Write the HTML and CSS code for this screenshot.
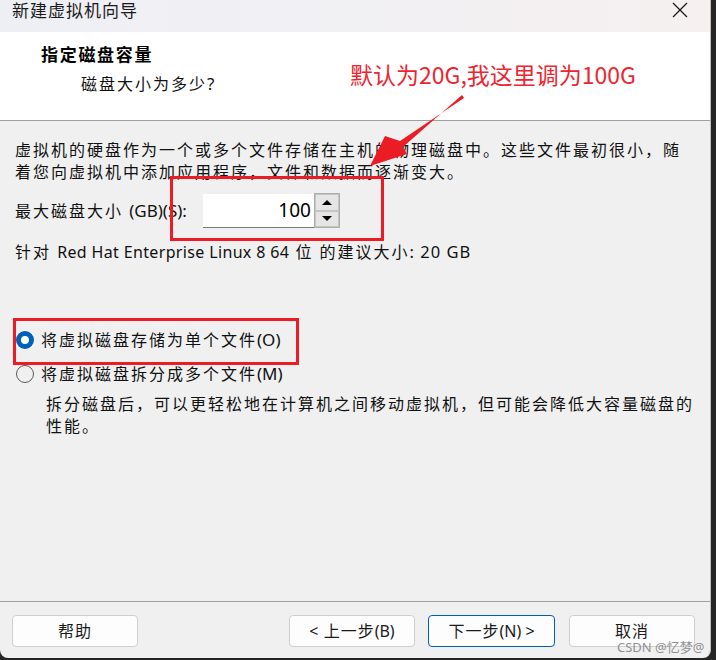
FILE: index.html
```html
<!DOCTYPE html>
<html lang="zh-CN">
<head>
<meta charset="utf-8">
<title>新建虚拟机向导</title>
<link rel="stylesheet" href="styles.css">
</head>
<body>
<div class="screen">
  <div class="window">
    <div class="titlebar">
      <span class="title">新建虚拟机向导</span>
      <svg class="close" width="16" height="16" viewBox="0 0 16 16"><path d="M1 1 L15 15 M15 1 L1 15" stroke="#1a1a1a" stroke-width="1.3" fill="none"/></svg>
    </div>
    <div class="header">
      <div class="h-title">指定磁盘容量</div>
      <div class="h-sub">磁盘大小为多少<span class="q">?</span></div>
    </div>
    <div class="content">
      <p class="para">虚拟机的硬盘作为一个或多个文件存储在主机的物理磁盘中。这些文件最初很小，随<br>着您向虚拟机中添加应用程序，文件和数据而逐渐变大。</p>
      <div class="size-row">
        <span class="label">最大磁盘大小 <span class="en">(GB)(S):</span></span>
        <div class="spin">
          <div class="spin-input">100</div>
          <div class="spin-btns">
            <div class="spin-btn"><span class="tri-up"></span></div>
            <div class="spin-btn"><span class="tri-down"></span></div>
          </div>
        </div>
      </div>
      <p class="rec">针对 <span class="en os">Red Hat Enterprise Linux 8 64</span> 位 的建议大小<span class="en size">: 20 GB</span></p>
      <div class="radio-row first">
        <span class="radio checked"></span>
        <span class="radio-text">将虚拟磁盘存储为单个文件<span class="en">(O)</span></span>
      </div>
      <div class="radio-row">
        <span class="radio"></span>
        <span class="radio-text">将虚拟磁盘拆分成多个文件<span class="en">(M)</span></span>
      </div>
      <p class="desc">拆分磁盘后，可以更轻松地在计算机之间移动虚拟机，但可能会降低大容量磁盘的<br>性能。</p>
    </div>
    <div class="footer">
      <button class="btn">帮助</button>
      <div class="spacer"></div>
      <button class="btn"><span class="en">&lt;</span> 上一步<span class="en">(B)</span></button>
      <button class="btn primary">下一步<span class="en">(N) &gt;</span></button>
      <button class="btn cancel">取消</button>
    </div>
  </div>

  <div class="note">默认为20G,我这里调为100G</div>
  <svg class="arrow" width="716" height="660" viewBox="0 0 716 660">
    <polygon points="464,98 400,141 385,136 370,166 407,154 403,147 462,95" fill="#ec1c24"/>
  </svg>
  <div class="mark mark-size"></div>
  <div class="mark mark-radio"></div>
  <div class="watermark">CSDN @忆梦@</div>
</div>
</body>
</html>
```
FILE: styles.css
```css
* { box-sizing: border-box; }
html, body { margin: 0; padding: 0; }
body {
  background: #262626;
  font-family: "Noto Sans", "Noto Sans CJK SC", sans-serif;
  color: #111;
}
.screen {
  position: relative;
  width: 716px;
  height: 660px;
  overflow: hidden;
  background: #262626;
}
.window {
  width: 711px;
  height: 658px;
  background: #f0f0f0;
  border-right: 1px solid #bdbdbd;
  border-radius: 0 0 8px 8px;
  display: flex;
  flex-direction: column;
  overflow: hidden;
}
.titlebar {
  height: 32px;
  background: linear-gradient(90deg, #eeeff5 0%, #f1f0f3 50%, #f6f0f0 100%);
  display: flex;
  align-items: flex-start;
  padding: 1px 0 0 12px;
}
.title {
  font-family: "Noto Sans CJK SC", sans-serif;
  font-size: 17px;
  letter-spacing: 1px;
  color: #1a1a1a;
  line-height: 18px;
}
.close {
  margin-left: auto;
  margin-right: 22px;
  margin-top: 1px;
}
.header {
  height: 89px;
  background: #fff;
  border-bottom: 1px solid #a0a0a0;
  padding: 11px 0 0 41px;
}
.h-title {
  font-family: "Noto Sans CJK SC", sans-serif;
  font-weight: bold;
  font-size: 17px;
  letter-spacing: 1.7px;
  line-height: 22px;
  color: #000;
}
.h-sub {
  font-family: "Noto Sans CJK SC", sans-serif;
  font-size: 16px;
  letter-spacing: 2px;
  line-height: 22px;
  margin: 7px 0 0 40px;
  color: #111;
}
.q {
  font-family: "Noto Sans", sans-serif;
  font-size: 17px;
  letter-spacing: 0;
}
.content {
  flex: 1;
  padding: 18px 0 0 15px;
  font-size: 16px;
  letter-spacing: 2px;
  line-height: 22px;
}
.en {
  font-family: "Noto Sans", sans-serif;
  font-size: 17px;
  letter-spacing: 0;
}
.rec .en.os { font-size: 16px; letter-spacing: 0.35px; }
.rec .en.size { font-size: 16.5px; letter-spacing: 1px; }
.para { margin: 0; }
.size-row {
  display: flex;
  align-items: center;
  height: 34px;
  margin-top: 11px;
}
.spin {
  display: flex;
  margin-left: 16px;
}
.spin-input {
  width: 111px;
  height: 34px;
  background: #fff;
  border-bottom: 1px solid #7a7a7a;
  text-align: right;
  padding-right: 3px;
  font-family: "Noto Sans", sans-serif;
  font-size: 19px;
  letter-spacing: 0;
  line-height: 33px;
  color: #000;
}
.spin-btns {
  display: flex;
  flex-direction: column;
  width: 26px;
  height: 35px;
  margin-top: -1px;
  border: 1px solid #adadad;
  background: #e5e5e5;
}
.spin-btn {
  flex: 1;
  border: 1px solid #c4c4c4;
  display: flex;
  align-items: center;
  justify-content: center;
}
.tri-up {
  width: 0; height: 0;
  border-left: 5px solid transparent;
  border-right: 5px solid transparent;
  border-bottom: 5px solid #000;
}
.tri-down {
  width: 0; height: 0;
  border-left: 5px solid transparent;
  border-right: 5px solid transparent;
  border-top: 5px solid #000;
}
.rec { margin: 13px 0 0; }
.radio-row {
  display: flex;
  align-items: center;
  height: 22px;
  margin-top: 12px;
}
.radio-row.first { margin-top: 66px; }
.radio {
  width: 18px;
  height: 18px;
  border-radius: 50%;
  border: 1px solid #5a5a5a;
  margin-left: 1px;
  flex: none;
}
.radio.checked {
  border: 5px solid #005fb8;
  background: #fff;
}
.radio-text { margin-left: 7px; color: #111; }
.desc { margin: 8px 0 0 31px; }
.footer {
  height: 57px;
  border-top: 1px solid #a0a0a0;
  display: flex;
  align-items: flex-start;
  padding: 13px 15px 0 12px;
}
.spacer { flex: 1; }
.btn {
  width: 126px;
  height: 32px;
  background: #fdfdfd;
  border: 1px solid #d0d0d0;
  border-radius: 4px;
  font-family: "Noto Sans", "Noto Sans CJK SC", sans-serif;
  font-size: 16px;
  letter-spacing: 1px;
  color: #1a1a1a;
  padding: 0;
  line-height: 30px;
}
.btn .en { font-size: 16px; }
.btn.primary {
  width: 127px;
  margin-left: 13px;
  border-color: #005fb8;
}
.btn.cancel { margin-left: 14px; }
.note {
  position: absolute;
  left: 350px;
  top: 59px;
  font-family: "Noto Sans CJK SC", sans-serif;
  font-size: 23px;
  line-height: 30px;
  color: #ee2530;
  white-space: nowrap;
}
.arrow {
  position: absolute;
  left: 0;
  top: 0;
}
.mark {
  position: absolute;
  border: 3px solid #ec1c24;
}
.mark-size { left: 170px; top: 176px; width: 214px; height: 65px; }
.mark-radio { left: 13px; top: 318px; width: 286px; height: 47px; }
.watermark {
  position: absolute;
  left: 617px;
  top: 637px;
  font-family: "Noto Sans", "Noto Sans CJK SC", sans-serif;
  font-size: 13px;
  color: rgba(110,110,110,0.75);
  white-space: nowrap;
}
```
